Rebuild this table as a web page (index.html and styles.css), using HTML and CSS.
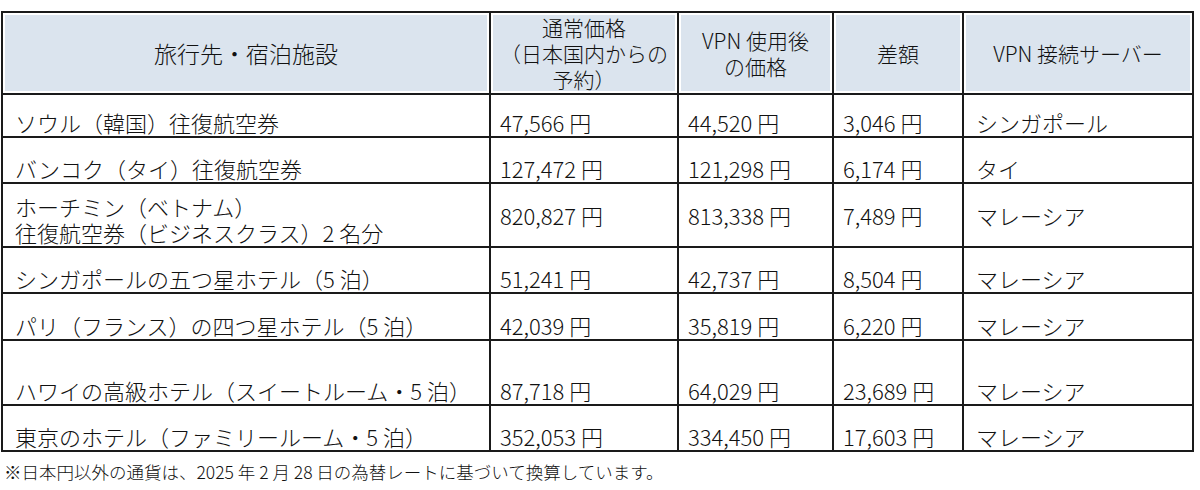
FILE: index.html
```html
<!DOCTYPE html>
<html lang="ja">
<head>
<meta charset="utf-8">
<title>VPN 価格比較</title>
<link rel="stylesheet" href="styles.css">
</head>
<body>
<div class="page">
  <table class="price-table">
    <colgroup>
      <col class="c-dest">
      <col class="c-normal">
      <col class="c-vpn">
      <col class="c-diff">
      <col class="c-server">
    </colgroup>
    <thead>
      <tr class="r-head">
        <th class="h-dest">旅行先・宿泊施設</th>
        <th>通常価格<br>（日本国内からの<br>予約）</th>
        <th>VPN 使用後<br>の価格</th>
        <th>差額</th>
        <th>VPN 接続サーバー</th>
      </tr>
    </thead>
    <tbody>
      <tr class="r1">
        <td class="dest">ソウル（韓国）往復航空券</td>
        <td>47,566 円</td>
        <td>44,520 円</td>
        <td>3,046 円</td>
        <td class="srv">シンガポール</td>
      </tr>
      <tr class="r2">
        <td class="dest">バンコク（タイ）往復航空券</td>
        <td>127,472 円</td>
        <td>121,298 円</td>
        <td>6,174 円</td>
        <td class="srv">タイ</td>
      </tr>
      <tr class="r3">
        <td class="dest">ホーチミン（ベトナム）<br>往復航空券（ビジネスクラス）2 名分</td>
        <td class="mid">820,827 円</td>
        <td class="mid">813,338 円</td>
        <td class="mid">7,489 円</td>
        <td class="srv mid">マレーシア</td>
      </tr>
      <tr class="r4">
        <td class="dest">シンガポールの五つ星ホテル（5 泊）</td>
        <td>51,241 円</td>
        <td>42,737 円</td>
        <td>8,504 円</td>
        <td class="srv">マレーシア</td>
      </tr>
      <tr class="r5">
        <td class="dest">パリ（フランス）の四つ星ホテル（5 泊）</td>
        <td>42,039 円</td>
        <td>35,819 円</td>
        <td>6,220 円</td>
        <td class="srv">マレーシア</td>
      </tr>
      <tr class="r6">
        <td class="dest">ハワイの高級ホテル（スイートルーム・5 泊）</td>
        <td>87,718 円</td>
        <td>64,029 円</td>
        <td>23,689 円</td>
        <td class="srv">マレーシア</td>
      </tr>
      <tr class="r7">
        <td class="dest">東京のホテル（ファミリールーム・5 泊）</td>
        <td>352,053 円</td>
        <td>334,450 円</td>
        <td>17,603 円</td>
        <td class="srv">マレーシア</td>
      </tr>
    </tbody>
  </table>
  <p class="note">※日本円以外の通貨は、2025 年 2 月 28 日の為替レートに基づいて換算しています。</p>
</div>
</body>
</html>
```

FILE: styles.css
```css
html, body {
  margin: 0;
  padding: 0;
  background: #ffffff;
}

body {
  font-family: "Noto Sans CJK JP", "Noto Sans", sans-serif;
  font-weight: 300;
  color: #111111;
}

.page {
  padding: 11px 0 0 1px;
}

.price-table {
  border-collapse: collapse;
  table-layout: fixed;
  width: 1191px;
  font-size: 22px;
  line-height: 26px;
}

.c-dest { width: 488px; }
.c-normal { width: 188px; }
.c-vpn { width: 155px; }
.c-diff { width: 130px; }
.c-server { width: 230px; }

.price-table th,
.price-table td {
  border: 2px solid #1a1a1a;
  padding: 0 6px 1px 9px;
  text-align: left;
  vertical-align: bottom;
  white-space: nowrap;
  overflow: hidden;
}

.price-table th {
  background: #dbe4ee;
  box-shadow: inset 0 0 0 2px #ffffff;
  font-weight: 300;
  font-size: 21px;
  text-align: center;
  vertical-align: middle;
  padding: 0 4px;
}

.price-table th.h-dest {
  font-size: 23px;
}

.price-table td.dest {
  padding-left: 12px;
}

.price-table td.srv {
  padding-left: 12px;
}

.price-table td.mid {
  vertical-align: middle;
}

.r-head { height: 82px; }
.r1 { height: 43px; }
.r2 { height: 46px; }
.r3 { height: 64px; }
.r4 { height: 46px; }
.r5 { height: 47px; }
.r6 { height: 65px; }
.r7 { height: 46px; }

.note {
  margin: 9px 0 0 3px;
  font-size: 17.5px;
  line-height: 22px;
}
```
